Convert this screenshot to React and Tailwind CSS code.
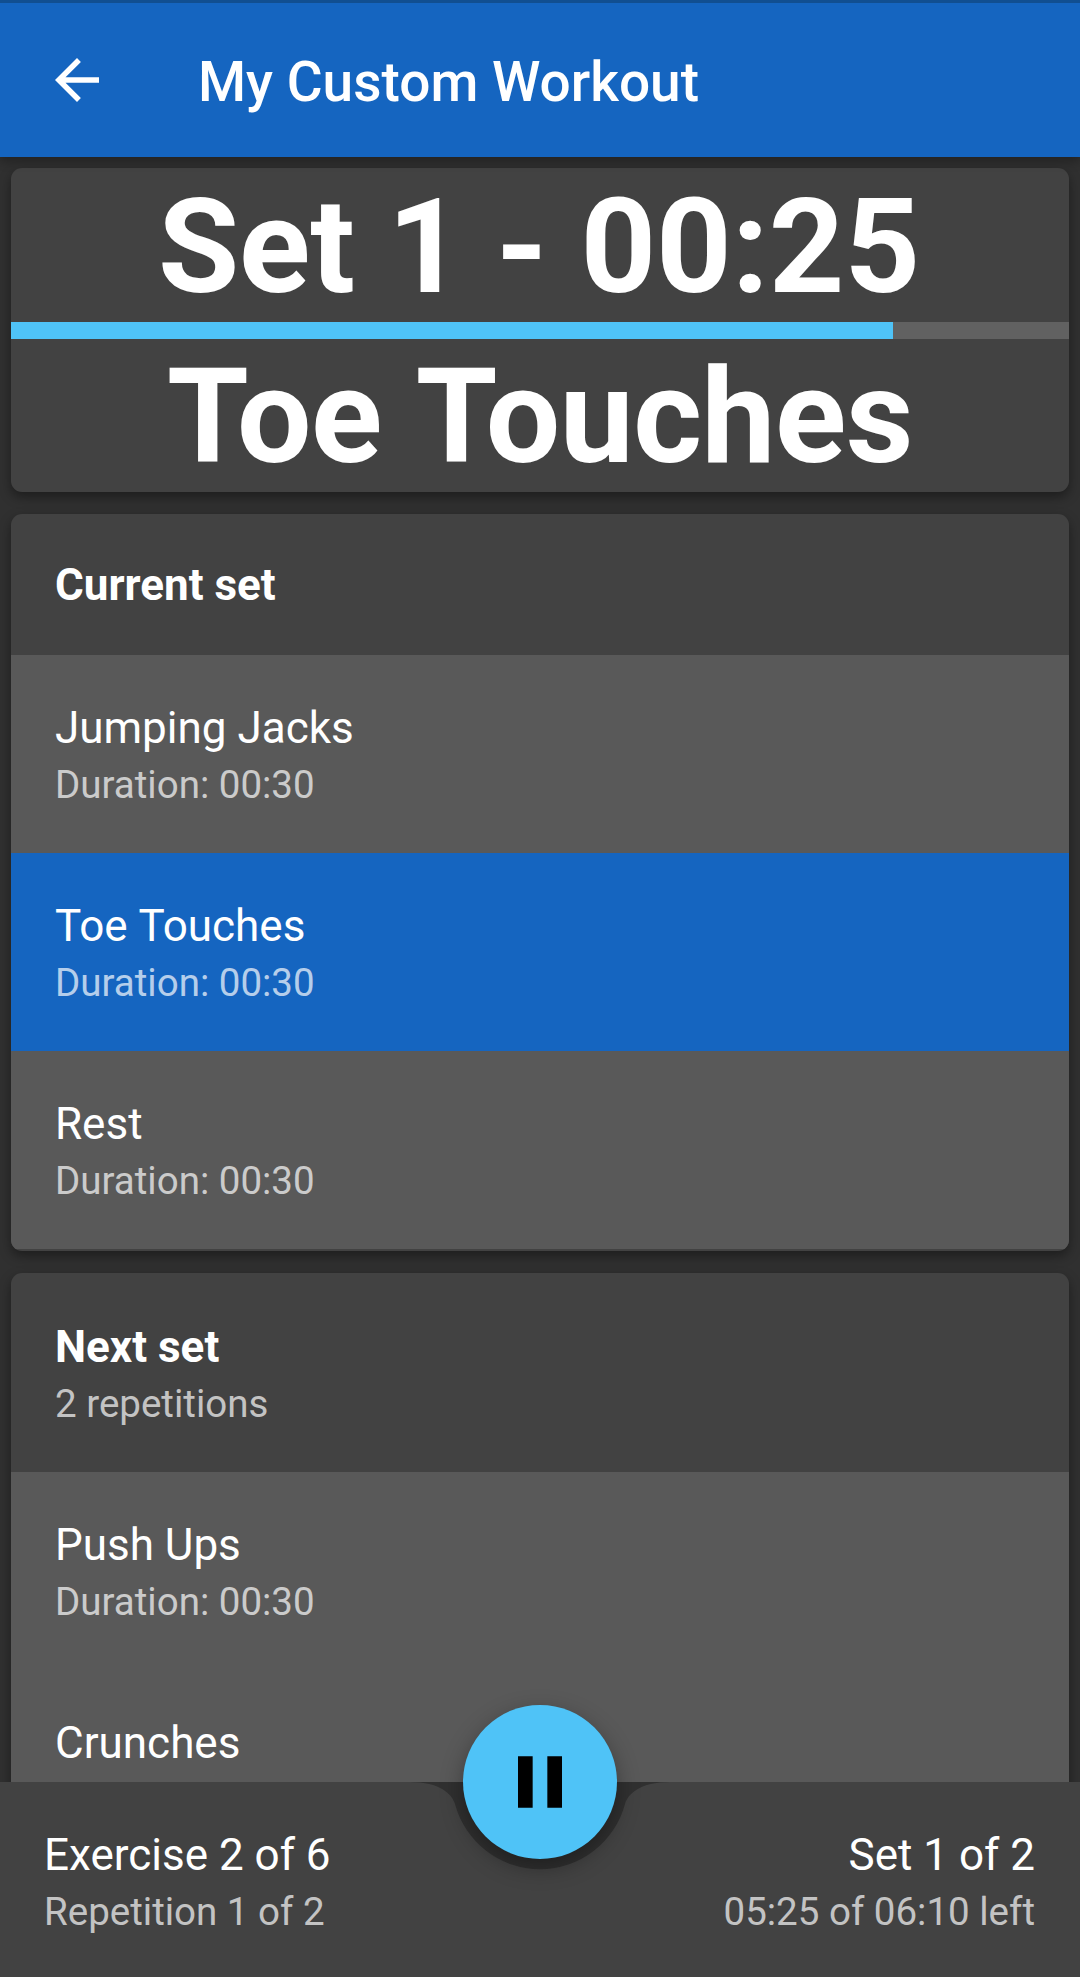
const Item = ({ title, sub, active }) => (
  <div className={"flex h-[198px] shrink-0 flex-col px-11 pt-[45px] " + (active ? "bg-[#1565c0]" : "bg-[#595959]")}>
    <span className={"text-[44px] leading-[56px] text-white " + (active ? "[word-spacing:1px]" : "")}>{title}</span>
    {sub && <span className="text-[38.5px] leading-[57px] text-white/70">{sub}</span>}
  </div>
);

export default function App() {
  return (
    <div className="flex h-[1977px] w-[1080px] flex-col overflow-hidden bg-[#303030] font-[Roboto,sans-serif] text-white">
      <header className="z-10 flex h-[157px] shrink-0 items-center border-t-3 border-[#114f91] bg-[#1565c0] pl-[55px] shadow-[0_4px_10px_rgba(0,0,0,0.3)]">
        <svg className="h-[44px] w-[44px]" viewBox="4 4 16 16" fill="#fff">
          <path d="M20 11H7.83l5.59-5.59L12 4l-8 8 8 8 1.41-1.41L7.83 13H20v-2z" />
        </svg>
        <h1 className="ml-[99px] pt-[3px] text-[55px] leading-[64px] font-medium">My Custom Workout</h1>
      </header>
      <main className="flex h-[1625px] shrink-0 flex-col overflow-hidden px-[11px] pt-[11px]">
        <section className="flex h-[324px] shrink-0 flex-col rounded-[11px] bg-[#424242] text-center text-[132px] font-bold shadow-[0_5px_12px_rgba(0,0,0,0.4)]">
          <div className="h-[154px] pt-1 pr-0.5 leading-[150px] tracking-[-0.1px]">Set 1 - 00:25</div>
          <div className="h-[16.67px] bg-[#616161]">
            <div className="h-full w-[83.333%] bg-[#4fc3f7]" />
          </div>
          <div className="h-[153px] pt-1 leading-[149px] tracking-[-0.5px] [word-spacing:5px]">Toe Touches</div>
        </section>
        <section className="mt-[22px] flex h-[737px] shrink-0 flex-col overflow-hidden rounded-[11px] bg-[#424242] shadow-[0_5px_12px_rgba(0,0,0,0.4)]">
          <div className="h-[141px] shrink-0 px-11 text-[44px] leading-[142px] font-bold">Current set</div>
          <Item title="Jumping Jacks" sub="Duration: 00:30" />
          <Item title="Toe Touches" sub="Duration: 00:30" active />
          <Item title="Rest" sub="Duration: 00:30" />
        </section>
        <section className="mt-[22px] flex h-[800px] shrink-0 flex-col overflow-hidden rounded-[11px] bg-[#424242] shadow-[0_5px_12px_rgba(0,0,0,0.4)]">
          <div className="flex h-[199px] shrink-0 flex-col px-11 pt-[46px]">
            <span className="text-[44px] leading-[56px] font-bold">Next set</span>
            <span className="text-[38.5px] leading-[57px] text-white/70">2 repetitions</span>
          </div>
          <Item title="Push Ups" sub="Duration: 00:30" />
          <Item title="Crunches" />
        </section>
      </main>
      <footer className="relative z-10 flex h-[195px] shrink-0 justify-between pt-[45px] pr-[45px] pl-11">
        <svg className="absolute inset-0 h-[195px] w-[1080px] overflow-visible" viewBox="0 0 1080 195">
          <path d="M0 0H410C440 0 452 12 455 22A88 88 0 0 0 625 22C628 12 640 0 670 0H1080V195H0Z" fill="#424242" />
        </svg>
        <div className="relative flex flex-col">
          <span className="text-[44px] leading-[56px]">Exercise 2 of 6</span>
          <span className="text-[38.5px] leading-[57px] text-white/70">Repetition 1 of 2</span>
        </div>
        <div className="relative flex flex-col text-right">
          <span className="text-[44px] leading-[56px]">Set 1 of 2</span>
          <span className="text-[38.5px] leading-[57px] text-white/70">05:25 of 06:10 left</span>
        </div>
        <button className="absolute top-[-77px] left-[463px] flex h-[154px] w-[154px] items-center justify-center rounded-full bg-[#4fc3f7] shadow-[0_8px_22px_rgba(0,0,0,0.35)]">
          <svg className="h-[88px] w-[88px]" viewBox="0 0 24 24" fill="#000">
            <path d="M6 19h4V5H6v14zm8-14v14h4V5h-4z" />
          </svg>
        </button>
      </footer>
    </div>
  );
}
